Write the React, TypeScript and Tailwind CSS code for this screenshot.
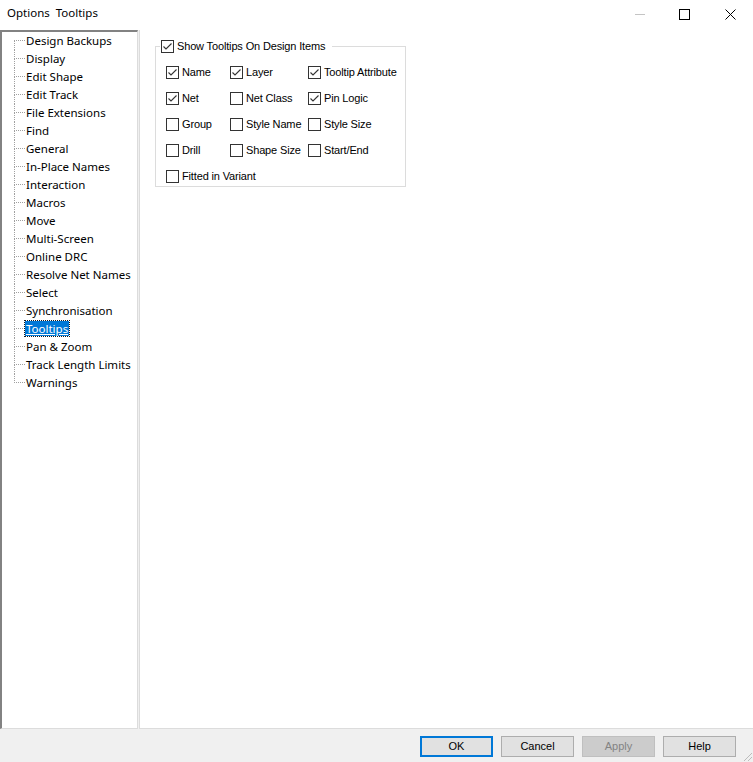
import React from "react";

const treeItems = [
  "Design Backups",
  "Display",
  "Edit Shape",
  "Edit Track",
  "File Extensions",
  "Find",
  "General",
  "In-Place Names",
  "Interaction",
  "Macros",
  "Move",
  "Multi-Screen",
  "Online DRC",
  "Resolve Net Names",
  "Select",
  "Synchronisation",
  "Tooltips",
  "Pan & Zoom",
  "Track Length Limits",
  "Warnings",
];

const options = [
  { label: "Name", checked: true },
  { label: "Layer", checked: true },
  { label: "Tooltip Attribute", checked: true },
  { label: "Net", checked: true },
  { label: "Net Class", checked: false },
  { label: "Pin Logic", checked: true },
  { label: "Group", checked: false },
  { label: "Style Name", checked: false },
  { label: "Style Size", checked: false },
  { label: "Drill", checked: false },
  { label: "Shape Size", checked: false },
  { label: "Start/End", checked: false },
  { label: "Fitted in Variant", checked: false },
];

const uiFont = { fontFamily: '"Noto Sans", "Open Sans", sans-serif' };
const sansSerif = { fontFamily: '"Liberation Sans", Arial, sans-serif' };

function CheckBox({ checked }: { checked: boolean }) {
  return (
    <span className="flex h-[13px] w-[13px] shrink-0 items-center justify-center border border-[#333333] bg-white">
      {checked && (
        <svg width="11" height="11" viewBox="0 0 11 11">
          <path d="M1.5 5.5 L4 8 L9.5 2.5" fill="none" stroke="#333333" strokeWidth="1.1" />
        </svg>
      )}
    </span>
  );
}

function TreeRow({ label, index, total }: { label: string; index: number; total: number }) {
  const selected = label === "Tooltips";
  const first = index === 0;
  const last = index === total - 1;
  return (
    <li className="flex h-[18px] items-stretch">
      <div className="flex w-[11px] flex-col">
        <div
          className={
            "h-[9px] border-b border-dotted border-b-[#a0a0a0] " +
            (first ? "" : "border-l border-l-[#a0a0a0]")
          }
        />
        <div className={"h-[9px] border-dotted " + (last ? "" : "border-l border-l-[#a0a0a0]")} />
      </div>
      <div className="flex items-center pb-[2px]">
        <span
          className={
            "px-[1px] text-[11.5px] leading-[15px] " +
            (selected
              ? "bg-[#0078d7] text-white underline outline outline-1 outline-dotted outline-[#1a1a1a]"
              : "text-black")
          }
        >
          {label}
        </span>
      </div>
    </li>
  );
}

export default function App() {
  return (
    <div className="flex h-[762px] w-[753px] flex-col overflow-hidden bg-white">
      {/* title bar */}
      <div className="flex h-[30px] shrink-0 items-start justify-between">
        <span className="pl-[7px] pt-[5px] text-[11.5px] leading-[16px] text-black" style={uiFont}>
          Options&nbsp; Tooltips
        </span>
        <div className="flex h-[28px]">
          <div className="flex w-[46px] items-center justify-center pl-[4px]">
            <svg width="10" height="10" viewBox="0 0 10 10">
              <path d="M0 5.5 H10" stroke="#c4c4c4" strokeWidth="1" />
            </svg>
          </div>
          <div className="flex w-[46px] items-center justify-center">
            <svg width="11" height="11" viewBox="0 0 11 11">
              <rect x="0.5" y="0.5" width="10" height="10" fill="none" stroke="#000" strokeWidth="1" />
            </svg>
          </div>
          <div className="flex w-[46px] items-center justify-center">
            <svg width="11" height="11" viewBox="0 0 11 11">
              <path d="M0.5 0.5 L10.5 10.5 M10.5 0.5 L0.5 10.5" stroke="#000" strokeWidth="1" />
            </svg>
          </div>
        </div>
      </div>

      {/* body */}
      <div className="flex min-h-0 flex-1">
        <div
          className="w-[138px] shrink-0 border-t-2 border-l-2 border-r border-b border-t-[#828282] border-l-[#828282] border-r-[#dcdcdc] border-b-[#dcdcdc] bg-white pl-[12px]"
          style={uiFont}
        >
          <ul className="flex flex-col">
            {treeItems.map((item, i) => (
              <TreeRow key={item} label={item} index={i} total={treeItems.length} />
            ))}
          </ul>
        </div>
        <div className="w-[1px] shrink-0 bg-[#f0f0f0]" />
        <div
          className="flex-1 border-l border-b border-[#dcdcdc] bg-white pl-[15px] pt-[10px] tracking-[-0.15px]"
          style={sansSerif}
        >
          <fieldset className="w-[251px] border border-[#dcdcdc] pb-[3px]">
            <legend className="ml-[4px] flex items-center gap-[3px] pl-[1px] pr-[7px]">
              <CheckBox checked={true} />
              <span className="text-[11px] leading-[13px] text-black">Show Tooltips On Design Items</span>
            </legend>
            <div className="grid grid-cols-[64px_78px_auto] gap-y-[13px] pl-[10px] pt-[13px]">
              {options.map((o) => (
                <label key={o.label} className="flex h-[13px] items-center gap-[3px] whitespace-nowrap">
                  <CheckBox checked={o.checked} />
                  <span className="text-[11px] leading-[13px] text-black">{o.label}</span>
                </label>
              ))}
            </div>
          </fieldset>
        </div>
      </div>

      {/* bottom bar */}
      <div
        className="relative flex h-[33px] shrink-0 items-start justify-end gap-[8px] bg-[#f0f0f0] pr-[17px] pt-[7px]"
        style={sansSerif}
      >
        <button className="h-[21px] w-[73px] border-2 border-[#0078d7] bg-[#e1e1e1] text-[11px] text-black">
          OK
        </button>
        <button className="h-[21px] w-[73px] border border-[#adadad] bg-[#e1e1e1] text-[11px] text-black">
          Cancel
        </button>
        <button className="h-[21px] w-[73px] border border-[#bfbfbf] bg-[#cccccc] text-[11px] text-[#838383]" disabled>
          Apply
        </button>
        <button className="h-[21px] w-[73px] border border-[#adadad] bg-[#e1e1e1] text-[11px] text-black">
          Help
        </button>
        <svg className="absolute bottom-0 right-0" width="12" height="12" viewBox="0 0 12 12">
          <path d="M11 3 L3 11 M11 7 L7 11" stroke="#bcbcbc" strokeWidth="1" />
        </svg>
      </div>
    </div>
  );
}
